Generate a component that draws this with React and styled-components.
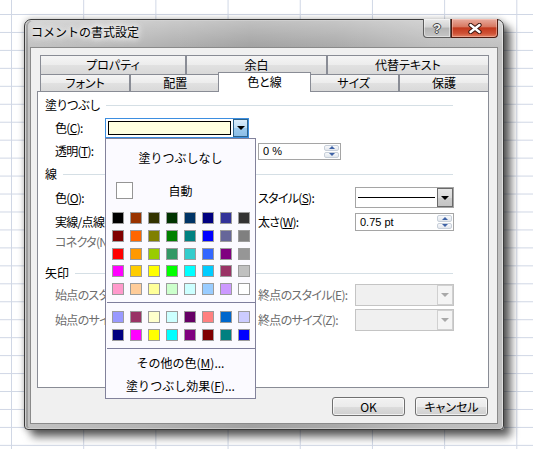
import React from "react";
import styled, { createGlobalStyle } from "styled-components";

const GlobalStyle = createGlobalStyle`
  html, body { margin: 0; padding: 0; }
  body {
    font-family: "Noto Sans CJK JP", "Noto Sans", sans-serif;
    font-size: 12px;
    color: #000;
  }
  * { box-sizing: border-box; }
`;

const palette = [
  ["#000000", "#993300", "#333300", "#003300", "#003366", "#000080", "#333399", "#333333"],
  ["#800000", "#FF6600", "#808000", "#008000", "#008080", "#0000FF", "#666699", "#808080"],
  ["#FF0000", "#FF9900", "#99CC00", "#339966", "#33CCCC", "#3366FF", "#800080", "#969696"],
  ["#FF00FF", "#FFCC00", "#FFFF00", "#00FF00", "#00FFFF", "#00CCFF", "#993366", "#C0C0C0"],
  ["#FF99CC", "#FFCC99", "#FFFF99", "#CCFFCC", "#CCFFFF", "#99CCFF", "#CC99FF", "#FFFFFF"],
];
const chartColors = [
  ["#9999FF", "#993366", "#FFFFCC", "#CCFFFF", "#660066", "#FF8080", "#0066CC", "#CCCCFF"],
  ["#000080", "#FF00FF", "#FFFF00", "#00FFFF", "#800080", "#800000", "#008080", "#0000FF"],
];

// excel sheet behind the dialog
const Sheet = styled.div`
  width: 533px;
  height: 449px;
  overflow: hidden;
  padding: 19px 0 0 24px;
  background-color: #fff;
  background-image: linear-gradient(to right, #d0d7e5 1px, transparent 1px),
    linear-gradient(to bottom, #d0d7e5 1px, transparent 1px);
  background-size: 72.2px 17.96px;
  background-position: 11px 14px;
`;

const Window = styled.div`
  width: 480px;
  height: 411px;
  display: flex;
  flex-direction: column;
  padding: 0 5px 5px;
  border: 1px solid #3b3b3b;
  border-radius: 7px 7px 4px 4px;
  background: linear-gradient(to bottom, rgba(255, 255, 255, 0.35), rgba(255, 255, 255, 0) 28px),
    linear-gradient(90deg, #c2c2c2 0%, #b4b4b4 25%, #a1a1a1 47%, #a9a9a9 65%, #bcbcbc 85%, #c0c0c0 100%);
  box-shadow: inset 0 0 0 1px rgba(255, 255, 255, 0.5), inset 2px 0 0 1px rgba(90, 90, 90, 0.35),
    0 0 6px rgba(0, 0, 0, 0.3), 7px 7px 9px rgba(0, 0, 0, 0.6);
`;

const TitleBar = styled.div`
  height: 27px;
  display: flex;
  align-items: flex-start;
`;

const Title = styled.div`
  padding: 4px 0 0 1px;
  line-height: 16px;
  font-size: 12px;
  text-shadow: 0 0 5px #fff, 0 0 8px #fff, 0 0 10px rgba(255, 255, 255, 0.9);
`;

const CaptionButtons = styled.div`
  margin-left: auto;
  margin-top: -1px;
  display: flex;
  height: 19px;
`;

const HelpButton = styled.div`
  width: 28px;
  display: flex;
  align-items: center;
  justify-content: center;
  border: 1px solid #5c5c5c;
  border-top: none;
  border-radius: 0 0 0 4px;
  background: linear-gradient(#eaeaea 0%, #d2d2d2 45%, #b4b4b4 50%, #c6c6c6 100%);
  box-shadow: inset 0 0 0 1px rgba(255, 255, 255, 0.45);
  font: bold 13px "Liberation Sans", sans-serif;
  color: #f2f2f2;
  text-shadow: 1px 0 #444, -1px 0 #444, 0 1px #444, 0 -1px #444;
`;

const CloseButton = styled.div`
  width: 47px;
  display: flex;
  align-items: center;
  justify-content: center;
  border: 1px solid #4e1b10;
  border-top: none;
  border-radius: 0 0 4px 0;
  background: linear-gradient(#e8ab9d 0%, #d87a63 42%, #c2391d 50%, #cf5236 80%, #e08062 100%);
  box-shadow: inset 0 0 0 1px rgba(255, 210, 200, 0.45);
`;

const Client = styled.div`
  flex: 1;
  display: flex;
  flex-direction: column;
  padding: 7px 8px 0 6px;
  border: 1px solid #8a8a8a;
  background: #f0f0f0;
  font-feature-settings: "palt";
`;

const TabRow = styled.div`
  display: flex;
  height: ${(p) => p.$h}px;
  margin-left: 3px;
`;

const Tab = styled.div`
  flex: ${(p) => (p.$w ? `0 0 ${p.$w}px` : p.$active ? "1 1 4px" : "1 1 0")};
  display: flex;
  align-items: center;
  justify-content: center;
  border: 1px solid #898c95;
  border-bottom: none;
  line-height: 14px;
  background: ${(p) =>
    p.$active ? "#fff" : "linear-gradient(#f5f5f5 0%, #ececec 50%, #e1e1e1 51%, #d9d9d9 100%)"};
  ${(p) =>
    p.$active &&
    `
    margin: -2px -2px -1px;
    padding-bottom: 1px;
    position: relative;
    z-index: 1;
  `}
`;

const Panel = styled.div`
  height: 297px;
  padding: 5px 0 0 7px;
  border: 1px solid #898c95;
  background: #fff;
`;

const GroupHeader = styled.div`
  display: flex;
  align-items: center;
  gap: 6px;
  width: 408px;
  height: 16px;
  margin-top: ${(p) => p.$mt || 0}px;
  line-height: 16px;
`;

const Rule = styled.div`
  flex: 1;
  height: 1px;
  background: #d5dfe5;
`;

const Row = styled.div`
  display: grid;
  grid-template-columns: 50px 153px 97px 99px;
  align-items: center;
  height: ${(p) => p.$h}px;
  margin: ${(p) => p.$mt}px 0 0 10px;
`;

const Label = styled.span`
  white-space: nowrap;
  line-height: 16px;
  letter-spacing: -0.7px;
  color: ${(p) => (p.$disabled ? "#6d6d6d" : "#000")};
`;

const U = styled.span`
  text-decoration: underline;
  text-underline-offset: 1px;
`;

const ComboAnchor = styled.div`
  position: relative;
  height: 100%;
`;

const ColorCombo = styled.div`
  width: 144px;
  height: 20px;
  display: flex;
  border: 1px solid #3d8ee0;
  background: #fff;
`;

const FillSwatch = styled.div`
  flex: 1;
  margin: 2px;
  border: 1px solid #000;
  background: ${(p) => p.$c};
`;

const HotDropButton = styled.div`
  width: 15px;
  display: flex;
  align-items: center;
  justify-content: center;
  border: 1px solid #2c628b;
  background: linear-gradient(#dcedfb 0%, #bcdcf4 50%, #9ccaee 51%, #8cbde6 100%);
`;

const Arrow = styled.span`
  width: 0;
  height: 0;
  border-left: 4px solid transparent;
  border-right: 4px solid transparent;
  border-top: 4px solid ${(p) => p.$c || "#000"};
`;

const Field = styled.div`
  width: ${(p) => p.$w}px;
  height: ${(p) => p.$h}px;
  display: flex;
  align-items: center;
  border: 1px solid ${(p) => (p.$disabled ? "#c4c4c4" : "#a5a5a5")};
  background: ${(p) => (p.$disabled ? "#f0f0f0" : "#fff")};
`;

const FieldText = styled.span`
  flex: 1;
  padding-left: 4px;
  font: 11px "Liberation Sans", Arial, sans-serif;
`;

const LineSample = styled.div`
  flex: 1;
  height: 1px;
  margin: 0 2px;
  background: #000;
`;

const DropButton = styled.div`
  width: 16px;
  align-self: stretch;
  display: flex;
  align-items: center;
  justify-content: center;
  border: 1px solid ${(p) => (p.$disabled ? "#d0d0d0" : "#6a6a6a")};
  background: ${(p) =>
    p.$disabled ? "#f4f4f4" : "linear-gradient(#e6e6e6 0%, #dadada 50%, #cdcdcd 51%, #c4c4c4 100%)"};
`;

const SpinButtons = styled.div`
  width: 15px;
  align-self: stretch;
  margin: 1px 1px 1px 0;
  display: flex;
  flex-direction: column;
  gap: 1px;
`;

const SpinHalf = styled.div`
  flex: 1;
  display: flex;
  align-items: center;
  justify-content: center;
  border: 1px solid #c8d0da;
  border-radius: 2px;
  background: linear-gradient(#f8f9fb, #e2e7ed);
`;

const SpinArrow = styled.span`
  width: 0;
  height: 0;
  border-left: 3px solid transparent;
  border-right: 3px solid transparent;
  ${(p) => (p.$up ? "border-bottom" : "border-top")}: 3px solid #3f63a6;
`;

const SliderTrack = styled.div`
  width: 140px;
  height: 4px;
  border: 1px solid #b0b0b0;
  background: #e7eaea;
`;

const Popup = styled.div`
  position: absolute;
  top: 100%;
  left: 0;
  z-index: 10;
  width: 151px;
  height: 261px;
  display: flex;
  flex-direction: column;
  border: 1px solid #82829b;
  background: #fbfaff;
  font-feature-settings: normal;
`;

const PopupItem = styled.div`
  height: ${(p) => p.$h}px;
  margin-top: ${(p) => p.$mt}px;
  line-height: ${(p) => p.$h}px;
  text-align: center;
  white-space: nowrap;
`;

const AutoRow = styled.div`
  display: grid;
  grid-template-columns: 1fr auto 1fr;
  align-items: center;
  height: 24px;
  margin-top: 7px;
`;

const AutoSwatch = styled.div`
  width: 17px;
  height: 17px;
  margin-left: 10px;
  border: 1px solid #959595;
  background: #fff;
`;

const SwatchGrid = styled.div`
  display: grid;
  grid-template-columns: repeat(8, 12px);
  grid-auto-rows: 12px;
  column-gap: 6px;
  row-gap: 5.75px;
  margin: ${(p) => p.$mt}px 0 0 6px;
`;

const Swatch = styled.div`
  border: 1px solid #9c9c9c;
  background: ${(p) => p.$c};
`;

const PopupSeparator = styled.div`
  height: 1px;
  margin: 7px 0 0 1px;
  background: #7e7e9c;
`;

const ButtonRow = styled.div`
  display: flex;
  justify-content: flex-end;
  gap: 10px;
  margin-top: 9px;
  padding-right: 1px;
`;

const PushButton = styled.div`
  width: 73px;
  height: 19px;
  display: flex;
  align-items: center;
  justify-content: center;
  border: 1px solid #707070;
  border-radius: 3px;
  background: linear-gradient(#f2f2f2 0%, #ebebeb 50%, #dddddd 51%, #cfcfcf 100%);
  box-shadow: inset 0 0 0 1px rgba(255, 255, 255, 0.7);
  line-height: 14px;
`;

const Spinner = ({ w, h, value }) => (
  <Field $w={w} $h={h}>
    <FieldText>{value}</FieldText>
    <SpinButtons>
      <SpinHalf>
        <SpinArrow $up />
      </SpinHalf>
      <SpinHalf>
        <SpinArrow />
      </SpinHalf>
    </SpinButtons>
  </Field>
);

const Combo = ({ w, h, disabled, children }) => (
  <Field $w={w} $h={h} $disabled={disabled}>
    {children || <FieldText />}
    <DropButton $disabled={disabled}>
      <Arrow $c={disabled ? "#a8a8a8" : "#000"} />
    </DropButton>
  </Field>
);

const ColorPopup = () => (
  <Popup>
    <PopupItem $h={26} $mt={6}>
      塗りつぶしなし
    </PopupItem>
    <AutoRow>
      <AutoSwatch />
      <span>自動</span>
      <span />
    </AutoRow>
    <SwatchGrid $mt={10}>
      {palette.flat().map((c, i) => (
        <Swatch key={i} $c={c} />
      ))}
    </SwatchGrid>
    <PopupSeparator />
    <SwatchGrid $mt={8}>
      {chartColors.flat().map((c, i) => (
        <Swatch key={i} $c={c} />
      ))}
    </SwatchGrid>
    <PopupSeparator />
    <PopupItem $h={23} $mt={2}>
      その他の色(<U>M</U>)...
    </PopupItem>
    <PopupItem $h={23} $mt={0}>
      塗りつぶし効果(<U>F</U>)...
    </PopupItem>
  </Popup>
);

export default function App() {
  return (
    <>
      <GlobalStyle />
      <Sheet>
        <Window>
          <TitleBar>
            <Title>コメントの書式設定</Title>
            <CaptionButtons>
              <HelpButton>?</HelpButton>
              <CloseButton>
                <svg width="14" height="11" viewBox="0 0 14 11">
                  <path d="M2.5 2 L11.5 9 M11.5 2 L2.5 9" stroke="#3b1710" strokeWidth="4.4" strokeLinecap="round" />
                  <path d="M2.5 2 L11.5 9 M11.5 2 L2.5 9" stroke="#fff" strokeWidth="2.4" strokeLinecap="round" />
                </svg>
              </CloseButton>
            </CaptionButtons>
          </TitleBar>
          <Client>
            <TabRow $h={19}>
              <Tab $w={146}>プロパティ</Tab>
              <Tab $w={141}>余白</Tab>
              <Tab $w={162}>代替テキスト</Tab>
            </TabRow>
            <TabRow $h={17}>
              {["フォント", "配置", "色と線", "サイズ", "保護"].map((t) => (
                <Tab key={t} $active={t === "色と線"}>
                  {t}
                </Tab>
              ))}
            </TabRow>
            <Panel>
              <GroupHeader>
                <span>塗りつぶし</span>
                <Rule />
              </GroupHeader>
              <Row $h={20} $mt={5}>
                <Label>
                  色(<U>C</U>):
                </Label>
                <ComboAnchor>
                  <ColorCombo>
                    <FillSwatch $c="#ffffe1" />
                    <HotDropButton>
                      <Arrow />
                    </HotDropButton>
                  </ColorCombo>
                  <ColorPopup />
                </ComboAnchor>
              </Row>
              <Row $h={18} $mt={4}>
                <Label>
                  透明(<U>T</U>):
                </Label>
                <SliderTrack />
                <Spinner w={83} h={17} value="0 %" />
              </Row>

              <GroupHeader $mt={6}>
                <span>線</span>
                <Rule />
              </GroupHeader>
              <Row $h={21} $mt={5}>
                <Label>
                  色(<U>O</U>):
                </Label>
                <Combo w={144} h={21} />
                <Label>
                  スタイル(<U>S</U>):
                </Label>
                <Combo w={99} h={21}>
                  <LineSample />
                </Combo>
              </Row>
              <Row $h={18} $mt={5}>
                <Label>
                  実線/点線(<U>D</U>):
                </Label>
                <Combo w={144} h={18} />
                <Label>
                  太さ(<U>W</U>):
                </Label>
                <Spinner w={99} h={18} value="0.75 pt" />
              </Row>
              <Row $h={18} $mt={2}>
                <Label $disabled>コネクタ(N)</Label>
              </Row>

              <GroupHeader $mt={14}>
                <span>矢印</span>
                <Rule />
              </GroupHeader>
              <Row $h={22} $mt={3}>
                <Label $disabled>始点のスタイル(B):</Label>
                <Combo w={144} h={22} disabled />
                <Label $disabled>終点のスタイル(E):</Label>
                <Combo w={99} h={22} disabled />
              </Row>
              <Row $h={22} $mt={3}>
                <Label $disabled>始点のサイズ(I):</Label>
                <Combo w={144} h={22} disabled />
                <Label $disabled>終点のサイズ(Z):</Label>
                <Combo w={99} h={22} disabled />
              </Row>
            </Panel>
            <ButtonRow>
              <PushButton>OK</PushButton>
              <PushButton>キャンセル</PushButton>
            </ButtonRow>
          </Client>
        </Window>
      </Sheet>
    </>
  );
}
